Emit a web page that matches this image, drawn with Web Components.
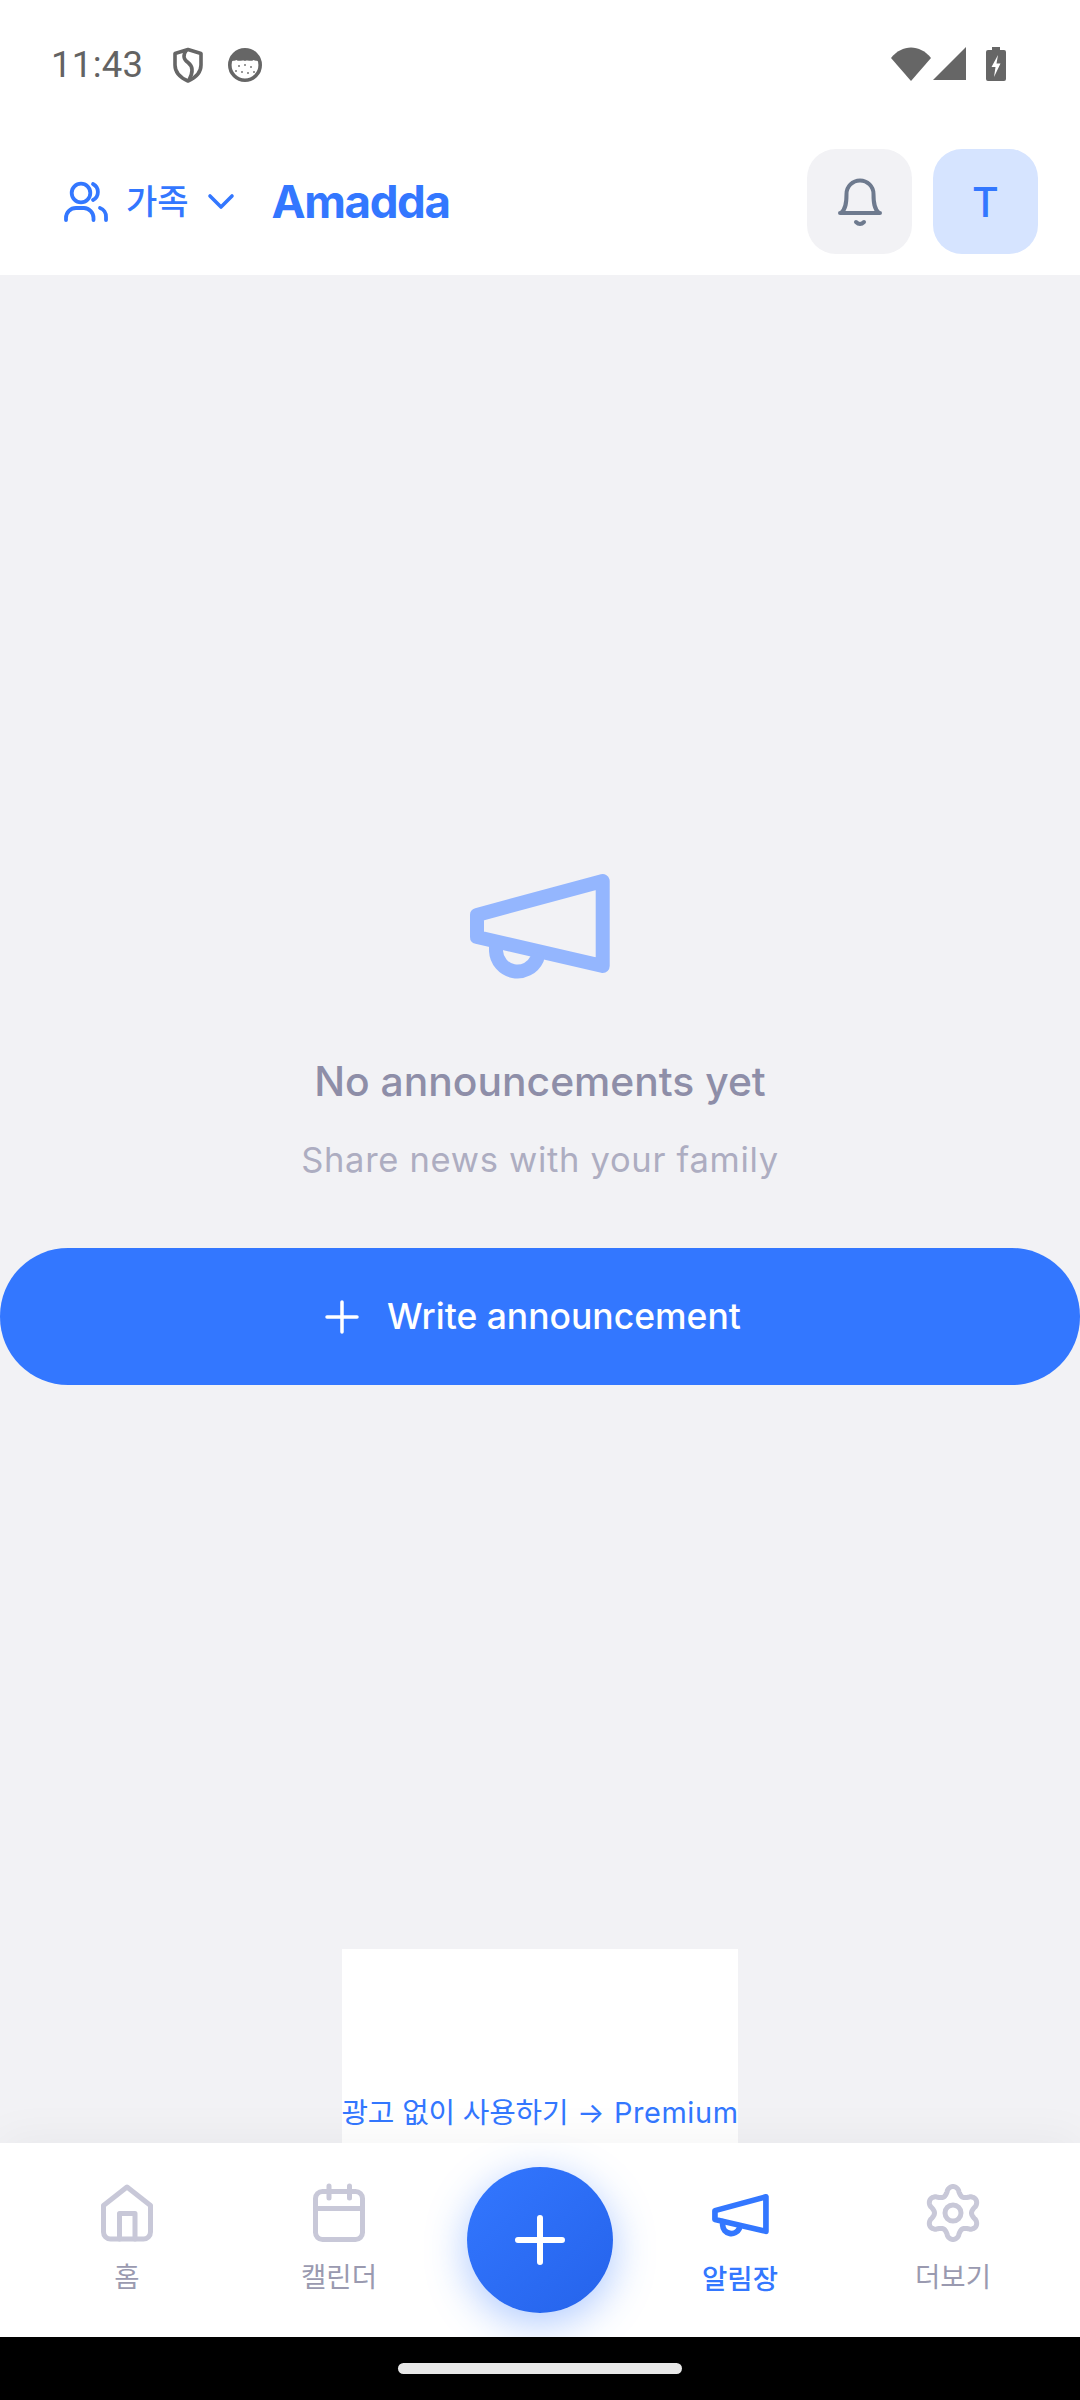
<!DOCTYPE html>
<html lang="ko">
<head>
<meta charset="utf-8">
<title>Amadda</title>
<style>
  html, body { margin: 0; padding: 0; }
  body { width: 1080px; height: 2400px; overflow: hidden; font-family: Inter, "Noto Sans CJK KR", sans-serif; background: #f2f2f5; }
  amadda-app { height: 2400px; }
</style>
</head>
<body>
<amadda-app>
  <status-bar slot="status" time="11:43"></status-bar>
  <top-header slot="header" group="가족" brand="Amadda" initial="T"></top-header>
  <empty-state slot="main" title="No announcements yet" sub="Share news with your family" action="Write announcement"></empty-state>
  <ad-banner slot="main" ko="광고 없이 사용하기" rest="→ Premium"></ad-banner>
  <bottom-nav slot="nav">
    <nav-item slot="left" icon="home" label="홈"></nav-item>
    <nav-item slot="left" icon="calendar" label="캘린더"></nav-item>
    <nav-item slot="right" icon="megaphone" label="알림장" active></nav-item>
    <nav-item slot="right" icon="gear" label="더보기"></nav-item>
  </bottom-nav>
  <gesture-bar slot="gesture"></gesture-bar>
</amadda-app>

<script>
  // gear outline, six lobes, traced around the centre
  const gearPath = (() => {
    const pts = [];
    for (let i = 0; i < 180; i++) {
      const a = i / 180 * Math.PI * 2;
      const c = Math.cos(6 * a);
      const r = 22.5 + 4 * Math.sign(c) * Math.pow(Math.abs(c), 0.75);
      pts.push(`${(26 + r * Math.sin(a)).toFixed(2)} ${(29 - r * Math.cos(a)).toFixed(2)}`);
    }
    return 'M' + pts.join('L') + 'Z';
  })();

  const ICONS = {
    home: { w: 52, h: 58, sw: 5, body: '<path d="M26 3 49.500 21.500V48a7 7 0 0 1-7 7H9.500a7 7 0 0 1-7-7V21.500Z"/><path d="M18.500 55V29.500H34V55"/>' },
    calendar: { w: 52, h: 58, sw: 5, body: '<rect x="2.500" y="7.500" width="47" height="48" rx="7"/><path d="M2.500 24.500H49.500M16 2V14M36.500 2V14"/>' },
    megaphone: { w: 140, h: 106, sw: 14, body: '<path d="M7 41 132.700 7V92L7 63Z"/><path d="M26 68V77A21.500 21.500 0 0 0 67 85"/>' },
    gear: { w: 52, h: 58, sw: 5, body: `<path d="${gearPath}"/><circle cx="26" cy="29" r="8"/>` },
    plus: { w: 50, h: 50, sw: 6, body: '<path d="M25 3V47M3 25H47"/>' },
    plusThin: { w: 32, h: 32, sw: 3.500, body: '<path d="M16 1V31M1 16H31"/>' },
    bell: { w: 44, h: 48, sw: 4, body: '<path d="M2 35H42M3 35C8 31 8.500 24 8.500 16A13.500 13.500 0 0 1 35.500 16C35.500 24 36 31 41 35Z"/><path d="M18 44Q22 48 26 44"/>' },
    users: { w: 44, h: 40, sw: 3.800, body: '<circle cx="17" cy="11" r="9.300"/><path d="M2 38V36A10 10 0 0 1 12 26H20A10 10 0 0 1 29.500 36V38M29 2A9 9 0 0 1 29 18M36 26A9 9 0 0 1 42 35V38"/>' },
    chevron: { w: 26, h: 16, sw: 3.600, body: '<path d="M2 2 13 13 24 2"/>' }
  };

  class AppIcon extends HTMLElement {
    connectedCallback() {
      const ic = ICONS[this.getAttribute('name')];
      this.attachShadow({ mode: 'open' }).innerHTML = `
        <style>:host { display: block; width: ${ic.w}px; height: ${ic.h}px; } svg { display: block; width: 100%; height: 100%; overflow: visible; }</style>
        <svg viewBox="0 0 ${ic.w} ${ic.h}" fill="none" stroke="currentColor" stroke-width="${ic.sw}" stroke-linecap="round" stroke-linejoin="round">${ic.body}</svg>`;
    }
  }
  customElements.define('app-icon', AppIcon);

  class AmaddaApp extends HTMLElement {
    constructor() {
      super();
      this.attachShadow({ mode: 'open' }).innerHTML = `
        <style>
          :host { display: flex; flex-direction: column; width: 1080px; }
          main { flex: 1; min-height: 0; display: flex; flex-direction: column; align-items: center; background: #f2f2f5; }
        </style>
        <slot name="status"></slot>
        <slot name="header"></slot>
        <main><slot name="main"></slot></main>
        <slot name="nav"></slot>
        <slot name="gesture"></slot>`;
    }
  }
  customElements.define('amadda-app', AmaddaApp);

  class StatusBar extends HTMLElement {
    connectedCallback() {
      this.attachShadow({ mode: 'open' }).innerHTML = `
        <style>
          :host { display: flex; align-items: flex-start; height: 130px; box-sizing: border-box; padding: 47px 74px 0 51px; background: #fff; color: #666; }
          .time { font: 400 36.500px/36px Roboto, sans-serif; letter-spacing: .3px; margin-right: 5px; height: 36px; color: #636363; }
          .left { display: flex; align-items: flex-start; gap: 25px; flex: 1; }
          .right { display: flex; align-items: flex-start; }
          svg { display: block; }
        </style>
        <div class="left">
          <span class="time">${this.getAttribute('time')}</span>
          <svg width="30" height="36" viewBox="0 0 30 36" fill="none" stroke="#666" stroke-width="3.600">
            <path d="M15 2.500 28 6.500V18C28 26 22 31 15 34 8 31 2 26 2 18V6.500Z" stroke-linejoin="round"/>
            <path d="M13.500 3C9 9 11 12.500 15 15.500 19 18.500 21 24 16 33" />
          </svg>
          <svg width="34" height="34" viewBox="0 0 34 34" style="margin-top:1px">
            <circle cx="17" cy="17" r="15.200" fill="#fff" stroke="#666" stroke-width="3.600"/>
            <path d="M3 14C3 6 10 1.500 17 1.500S31 6 31 14C29 11.500 28 13.500 25.500 12 23 14 20 11.500 17 13 14 11.500 11 14 8.500 12 6 13.500 5 11.500 3 14Z" fill="#666"/>
            <g fill="#777"><circle cx="11" cy="18" r="1"/><circle cx="17" cy="17" r="1"/><circle cx="23" cy="19" r="1"/><circle cx="14" cy="24" r="1"/><circle cx="20" cy="25" r="1"/><circle cx="26" cy="24" r="1"/><circle cx="8" cy="23" r="1"/></g>
          </svg>
        </div>
        <div class="right">
          <svg width="40" height="34" viewBox="0 0 40 34"><path d="M0 11C11 -3 29 -3 40 11L20 34Z" fill="#666"/></svg>
          <svg width="34" height="34" viewBox="0 0 34 34" style="margin-left:2px"><path d="M33 0V33H0Z" fill="#666"/></svg>
          <svg width="20" height="34" viewBox="0 0 20 34" style="margin-left:19px">
            <path d="M6 0H14V3H18A2 2 0 0 1 20 5V32A2 2 0 0 1 18 34H2A2 2 0 0 1 0 32V5A2 2 0 0 1 2 3H6Z" fill="#666"/>
            <path d="M12 8 5.500 20H9.500L8 30 14.500 16.500H10.500Z" fill="#fff"/>
          </svg>
        </div>`;
    }
  }
  customElements.define('status-bar', StatusBar);

  class TopHeader extends HTMLElement {
    connectedCallback() {
      this.attachShadow({ mode: 'open' }).innerHTML = `
        <style>
          :host { display: flex; align-items: center; height: 145px; box-sizing: border-box; padding: 0 42px 2px 64px; background: #fff; color: #3377ff; font-family: Inter, "Noto Sans CJK KR", sans-serif; }
          .group { display: flex; align-items: center; }
          .group span { font: 500 34px/44px Inter, "Noto Sans CJK KR", sans-serif; margin: 0 19px 0 18px; }
          .brand { font-weight: 700; font-size: 45.700px; line-height: 56px; letter-spacing: -1.400px; margin-left: 38px; flex: 1; }
          .btn { width: 105px; height: 105px; border-radius: 29px; display: grid; place-items: center; }
          .bell { background: #f2f2f5; color: #6e7a8e; margin-right: 21px; }
          .avatar { background: #d6e4ff; font-weight: 550; font-size: 41px; }
        </style>
        <div class="group"><app-icon name="users"></app-icon><span>${this.getAttribute('group')}</span><app-icon name="chevron"></app-icon></div>
        <div class="brand">${this.getAttribute('brand')}</div>
        <div class="btn bell"><app-icon name="bell"></app-icon></div>
        <div class="btn avatar">${this.getAttribute('initial')}</div>`;
    }
  }
  customElements.define('top-header', TopHeader);

  class EmptyState extends HTMLElement {
    connectedCallback() {
      this.attachShadow({ mode: 'open' }).innerHTML = `
        <style>
          :host { display: flex; flex-direction: column; align-items: center; width: 100%; padding-top: 599px; font-family: Inter, "Noto Sans CJK KR", sans-serif; }
          .mega { color: #94b6fe; }
          .title { margin-top: 72.500px; font-weight: 450; font-size: 40.800px; line-height: 56px; color: #8e8ea8; }
          .sub { margin-top: 27px; font-size: 34.500px; line-height: 48px; letter-spacing: .7px; color: #adadc1; }
          .action { box-sizing: border-box; margin-top: 64.500px; width: 100%; height: 137px; border-radius: 68px; background: #3377ff; color: #fff; display: flex; align-items: center; justify-content: center; gap: 29px; padding-right: 13px; font-weight: 450; font-size: 35.500px; }
        </style>
        <app-icon class="mega" name="megaphone"></app-icon>
        <div class="title">${this.getAttribute('title')}</div>
        <div class="sub">${this.getAttribute('sub')}</div>
        <div class="action"><app-icon name="plusThin"></app-icon><span>${this.getAttribute('action')}</span></div>`;
    }
  }
  customElements.define('empty-state', EmptyState);

  class AdBanner extends HTMLElement {
    connectedCallback() {
      this.attachShadow({ mode: 'open' }).innerHTML = `
        <style>
          :host { display: flex; align-items: flex-end; justify-content: center; margin-top: auto; width: 396px; height: 194px; background: #fff; color: #3377ff; white-space: nowrap; font: 400 28.900px/36px Inter, "Noto Sans CJK KR", sans-serif; letter-spacing: .6px; box-sizing: border-box; padding-bottom: 12px; }
          .ko { letter-spacing: -.2px; }
        </style>
        <span><span class="ko">${this.getAttribute('ko')}</span> ${this.getAttribute('rest')}</span>`;
    }
  }
  customElements.define('ad-banner', AdBanner);

  class NavItem extends HTMLElement {
    connectedCallback() {
      this.attachShadow({ mode: 'open' }).innerHTML = `
        <style>
          :host { display: flex; flex-direction: column; align-items: center; width: 212px; padding-top: 41px; box-sizing: border-box; color: #c8c8d8; font-family: "Noto Sans CJK KR", sans-serif; }
          .slot { height: 58px; display: flex; align-items: center; justify-content: center; }
          .label { margin-top: 15px; font-size: 27.500px; line-height: 36px; color: #9a9ab0; }
          :host([active]) { color: #3377ff; }
          :host([active]) .slot { margin-left: -1px; }
          :host([active]) .label { color: #3377ff; font-weight: 500; margin: 17px 2px 0 0; }
          :host([active]) app-icon { width: 57px; height: 43px; margin-top: 5px; }
        </style>
        <div class="slot"><app-icon name="${this.getAttribute('icon')}"></app-icon></div>
        <div class="label">${this.getAttribute('label')}</div>`;
    }
  }
  customElements.define('nav-item', NavItem);

  class BottomNav extends HTMLElement {
    constructor() {
      super();
      this.attachShadow({ mode: 'open' }).innerHTML = `
        <style>
          :host { position: relative; display: flex; height: 194px; box-sizing: border-box; padding: 0 21px; background: #fff; box-shadow: 0 -6px 42px rgba(0,0,0,.045); }
          .row { display: flex; }
          .fab-cell { width: 190px; display: flex; justify-content: center; padding-top: 24px; }
          .fab { width: 146px; height: 146px; border-radius: 50%; background: linear-gradient(135deg, #3377ff, #2563eb); color: #fff; display: grid; place-items: center; box-shadow: 0 10px 42px rgba(51,119,255,.4); }
        </style>
        <div class="row"><slot name="left"></slot></div>
        <div class="fab-cell"><div class="fab"><app-icon name="plus"></app-icon></div></div>
        <div class="row"><slot name="right"></slot></div>`;
    }
  }
  customElements.define('bottom-nav', BottomNav);

  class GestureBar extends HTMLElement {
    constructor() {
      super();
      this.attachShadow({ mode: 'open' }).innerHTML = `
        <style>
          :host { position: relative; display: flex; justify-content: center; height: 63px; box-sizing: border-box; padding-top: 26px; background: #000; }
          div { width: 284px; height: 11px; border-radius: 6px; background: #e8e8e8; }
        </style>
        <div></div>`;
    }
  }
  customElements.define('gesture-bar', GestureBar);
</script>
</body>
</html>
